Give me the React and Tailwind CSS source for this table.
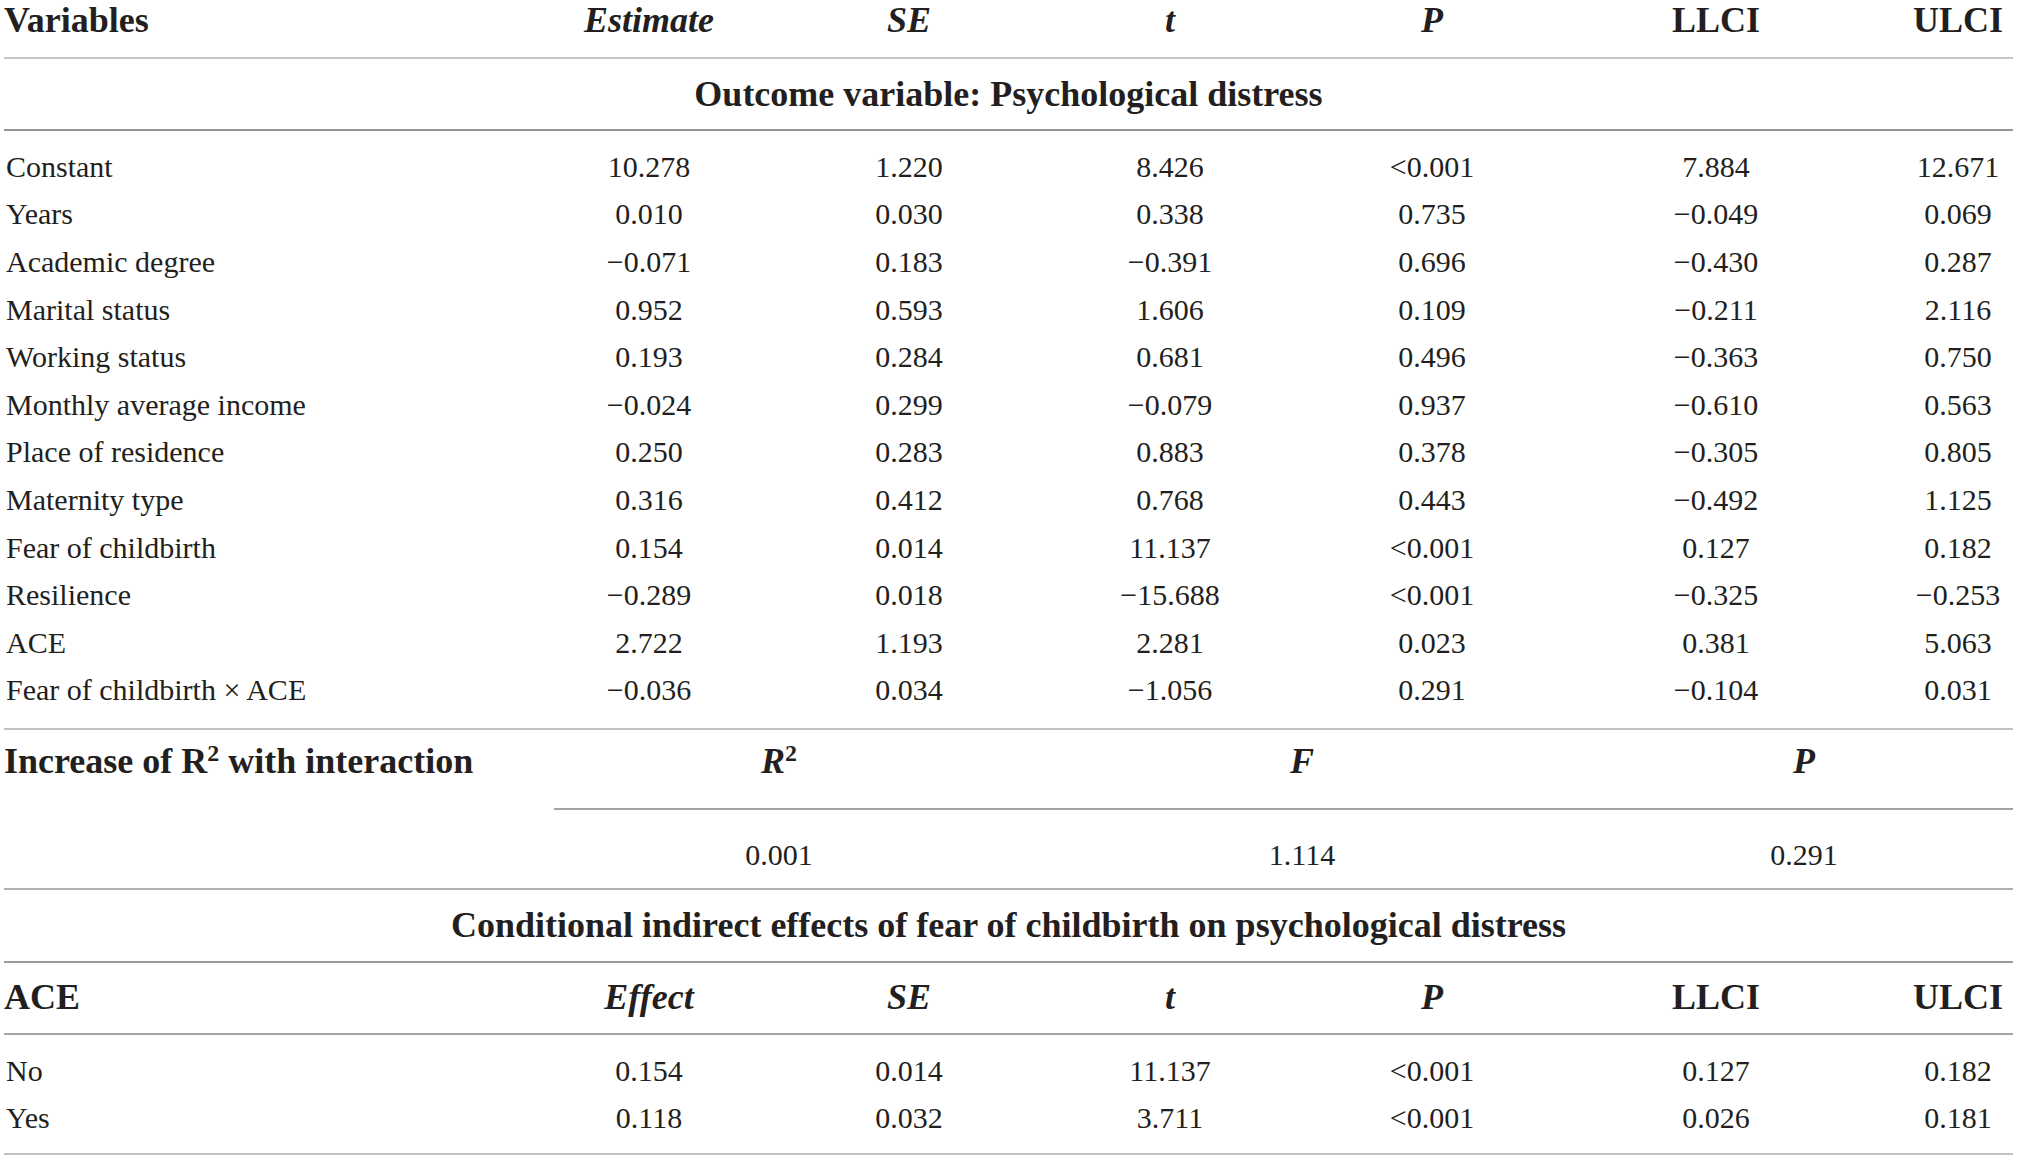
import React from "react";

const cols = "grid grid-cols-[515px_260px_260px_262px_262px_306px_1fr]";

const mainRows = [
  ["Constant", "10.278", "1.220", "8.426", "<0.001", "7.884", "12.671"],
  ["Years", "0.010", "0.030", "0.338", "0.735", "\u22120.049", "0.069"],
  ["Academic degree", "\u22120.071", "0.183", "\u22120.391", "0.696", "\u22120.430", "0.287"],
  ["Marital status", "0.952", "0.593", "1.606", "0.109", "\u22120.211", "2.116"],
  ["Working status", "0.193", "0.284", "0.681", "0.496", "\u22120.363", "0.750"],
  ["Monthly average income", "\u22120.024", "0.299", "\u22120.079", "0.937", "\u22120.610", "0.563"],
  ["Place of residence", "0.250", "0.283", "0.883", "0.378", "\u22120.305", "0.805"],
  ["Maternity type", "0.316", "0.412", "0.768", "0.443", "\u22120.492", "1.125"],
  ["Fear of childbirth", "0.154", "0.014", "11.137", "<0.001", "0.127", "0.182"],
  ["Resilience", "\u22120.289", "0.018", "\u221215.688", "<0.001", "\u22120.325", "\u22120.253"],
  ["ACE", "2.722", "1.193", "2.281", "0.023", "0.381", "5.063"],
  ["Fear of childbirth \u00d7 ACE", "\u22120.036", "0.034", "\u22121.056", "0.291", "\u22120.104", "0.031"],
];

const aceRows = [
  ["No", "0.154", "0.014", "11.137", "<0.001", "0.127", "0.182"],
  ["Yes", "0.118", "0.032", "3.711", "<0.001", "0.026", "0.181"],
];

function HeadRow({ first, second, className }) {
  return (
    <div className={`${cols} ${className} text-[36px] font-bold leading-[41px]`}>
      <div className="text-left">{first}</div>
      <div className="text-center italic">{second}</div>
      <div className="text-center italic">SE</div>
      <div className="text-center italic">t</div>
      <div className="text-center italic">P</div>
      <div className="text-center">LLCI</div>
      <div className="pl-[34px] text-center">ULCI</div>
    </div>
  );
}

function DataRow({ row }) {
  return (
    <div className={`${cols} h-[47.6px] items-center text-[30px] leading-[34px]`}>
      {row.map((cell, i) => (
        <div
          key={i}
          className={i === 0 ? "pl-[2px] text-left" : i === 6 ? "pl-[34px] text-center" : "text-center"}
        >
          {cell}
        </div>
      ))}
    </div>
  );
}

export default function App() {
  return (
    <div className="w-[2019px] h-[1162px] bg-white pl-[4px] pr-[6px] font-['Liberation_Serif',serif] text-[#231f20]">
      {/* column heads */}
      <HeadRow first="Variables" second="Estimate" className="h-[57px] items-start" />
      <div className="h-[2px] bg-[#c6c6c6]" />

      <div className="flex h-[70px] items-center justify-center text-[36px] font-bold">
        Outcome variable: Psychological distress
      </div>
      <div className="h-[2px] bg-[#959595]" />

      <div className="pt-[12px] pb-[13.6px]">
        {mainRows.map((row) => (
          <DataRow key={row[0]} row={row} />
        ))}
      </div>
      <div className="h-[2px] bg-[#c0c0c0]" />

      {/* R2 increase block */}
      <div className="grid grid-cols-[550px_1fr]">
        <div className="pt-[11px] text-[36px] font-bold leading-[41px]">
          Increase of R<sup className="text-[24px]">2</sup> with interaction
        </div>
        <div>
          <div className="grid h-[78px] grid-cols-[450px_596px_1fr] pt-[11px] text-[36px] font-bold italic leading-[41px]">
            <div className="text-center">
              R<sup className="text-[24px] not-italic">2</sup>
            </div>
            <div className="text-center">F</div>
            <div className="pr-[5px] text-center">P</div>
          </div>
          <div className="h-[2px] bg-[#a2a2a2]" />
          <div className="grid h-[78px] grid-cols-[450px_596px_1fr] pt-[28px] text-[30px] leading-[34px]">
            <div className="text-center">0.001</div>
            <div className="text-center">1.114</div>
            <div className="pr-[5px] text-center">0.291</div>
          </div>
        </div>
      </div>
      <div className="h-[2px] bg-[#b0b0b0]" />

      <div className="flex h-[71px] items-center justify-center text-[36px] font-bold">
        Conditional indirect effects of fear of childbirth on psychological distress
      </div>
      <div className="h-[2px] bg-[#9a9a9a]" />

      <HeadRow first="ACE" second="Effect" className="h-[70px] items-center" />
      <div className="h-[2px] bg-[#a5a5a5]" />

      <div className="pt-[12px] pb-[11px]">
        {aceRows.map((row) => (
          <DataRow key={row[0]} row={row} />
        ))}
      </div>
      <div className="h-[2px] bg-[#c0c0c0]" />
    </div>
  );
}
